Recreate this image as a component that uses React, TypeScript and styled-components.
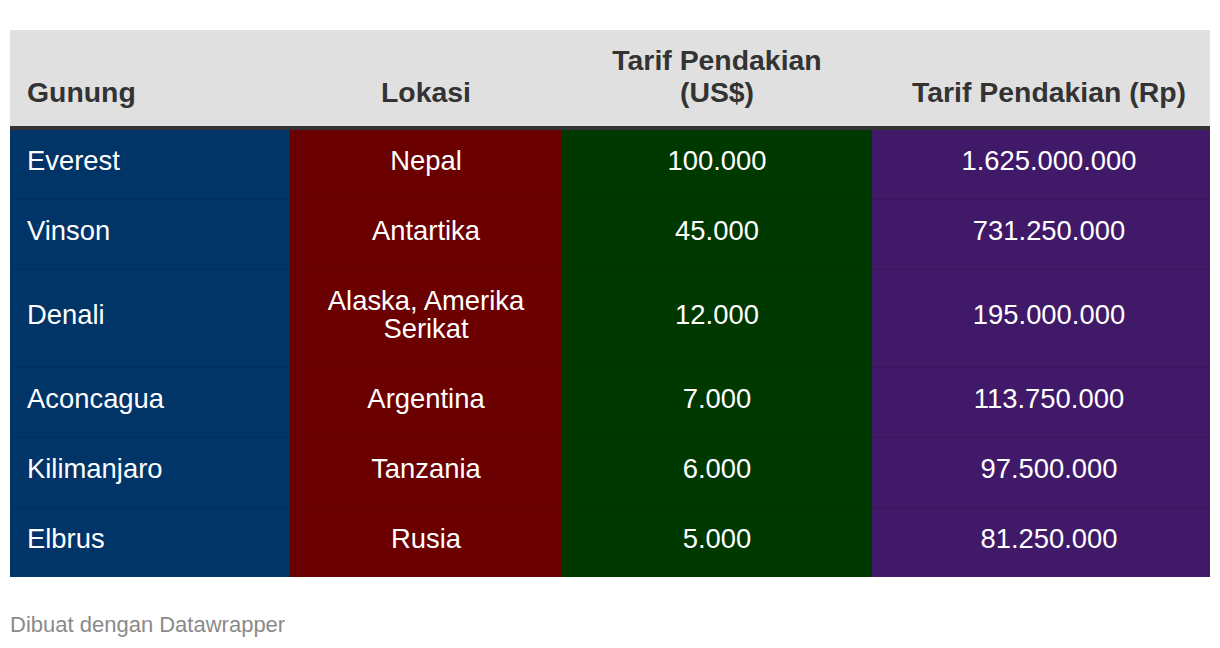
import React from "react";
import styled, { createGlobalStyle } from "styled-components";

const GlobalStyle = createGlobalStyle`
  html, body {
    margin: 0;
    padding: 0;
    background: #ffffff;
  }
  body {
    font-family: "Liberation Sans", Arial, Helvetica, sans-serif;
  }
`;

const Page = styled.div`
  padding: 30px 10px 0;
  width: 1200px;
`;

const Table = styled.table`
  width: 1200px;
  border-collapse: collapse;
  table-layout: fixed;
`;

type Align = "left" | "center";

const HeadCell = styled.th<{ $align: Align; $padLeft: number; $padRight: number }>`
  background: #e0e0e0;
  color: #333333;
  font-weight: 700;
  font-size: 28.4px;
  line-height: 32px;
  height: 64px;
  padding: 14px ${(p) => p.$padRight}px 18px ${(p) => p.$padLeft}px;
  text-align: ${(p) => p.$align};
  vertical-align: bottom;
  border-bottom: 4px solid #333333;
`;

const HeadRow = styled.tr``;

const BodyRow = styled.tr<{ $last?: boolean }>`
  & > td {
    border-bottom: ${(p) => (p.$last ? "none" : "1px solid rgba(0, 0, 0, 0.09)")};
  }
`;

const Cell = styled.td<{ $bg: string; $align: Align; $padLeft: number; $padRight: number }>`
  background: ${(p) => p.$bg};
  color: #ffffff;
  font-size: 27.4px;
  line-height: 28px;
  padding: 17px ${(p) => p.$padRight}px 24px ${(p) => p.$padLeft}px;
  text-align: ${(p) => p.$align};
  vertical-align: middle;
`;

const Footer = styled.div`
  margin-top: 35px;
  font-size: 22px;
  line-height: 26px;
  color: #8a8a8a;
`;

type Col = { title: string; width: number; bg: string; align: Align; padLeft: number; padRight: number };

const columns: Col[] = [
  { title: "Gunung", width: 280, bg: "#013467", align: "left", padLeft: 17, padRight: 17 },
  { title: "Lokasi", width: 272, bg: "#6b0000", align: "center", padLeft: 17, padRight: 17 },
  { title: "Tarif Pendakian (US$)", width: 310, bg: "#003900", align: "center", padLeft: 17, padRight: 17 },
  { title: "Tarif Pendakian (Rp)", width: 338, bg: "#411969", align: "center", padLeft: 33, padRight: 17 },
];

const rows: string[][] = [
  ["Everest", "Nepal", "100.000", "1.625.000.000"],
  ["Vinson", "Antartika", "45.000", "731.250.000"],
  ["Denali", "Alaska, Amerika Serikat", "12.000", "195.000.000"],
  ["Aconcagua", "Argentina", "7.000", "113.750.000"],
  ["Kilimanjaro", "Tanzania", "6.000", "97.500.000"],
  ["Elbrus", "Rusia", "5.000", "81.250.000"],
];

export default function App() {
  return (
    <>
      <GlobalStyle />
      <Page>
        <Table>
          <colgroup>
            {columns.map((c) => (
              <col key={c.title} style={{ width: c.width }} />
            ))}
          </colgroup>
          <thead>
            <HeadRow>
              {columns.map((c) => (
                <HeadCell key={c.title} $align={c.align} $padLeft={c.padLeft} $padRight={c.padRight}>
                  {c.title}
                </HeadCell>
              ))}
            </HeadRow>
          </thead>
          <tbody>
            {rows.map((r, i) => (
              <BodyRow key={r[0]} $last={i === rows.length - 1}>
                {r.map((v, j) => (
                  <Cell
                    key={j}
                    $bg={columns[j].bg}
                    $align={columns[j].align}
                    $padLeft={columns[j].padLeft}
                    $padRight={columns[j].padRight}
                  >
                    {v}
                  </Cell>
                ))}
              </BodyRow>
            ))}
          </tbody>
        </Table>
        <Footer>Dibuat dengan Datawrapper</Footer>
      </Page>
    </>
  );
}
